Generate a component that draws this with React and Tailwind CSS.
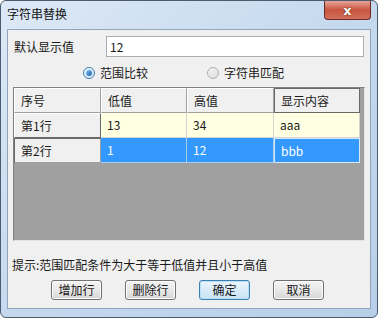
import React from "react";

const font = { fontFamily: '"Noto Sans CJK SC", "Liberation Sans", sans-serif' };

function Radio({ checked, label }) {
  return (
    <div className="flex items-center gap-[5px]">
      <span
        className={
          "w-[12px] h-[12px] rounded-full border flex items-center justify-center " +
          (checked
            ? "border-[#3c7fb1] bg-gradient-to-br from-[#f4f8fc] to-[#d4e3f2]"
            : "border-[#b0b0b0] bg-gradient-to-br from-[#f4f4f4] to-[#dcdcdc]")
        }
      >
        {checked && (
          <span className="w-[6px] h-[6px] rounded-full bg-gradient-to-br from-[#7fc3ff] to-[#1a5fa8]" />
        )}
      </span>
      <span className="text-[12px] leading-none text-[#1a1a1a]">{label}</span>
    </div>
  );
}

function Btn({ children, primary }) {
  return (
    <button
      className={
        "w-[51px] h-[20px] rounded-[3px] border text-[12px] leading-none text-[#1a1a1a] flex items-center justify-center " +
        (primary
          ? "border-[#3c7fb1] bg-gradient-to-b from-[#eaf5fc] to-[#c9e3f5] shadow-[inset_0_0_0_1px_#b9e0f7]"
          : "border-[#707070] bg-gradient-to-b from-[#f3f3f3] via-[#e8e8e8] to-[#d6d6d6] shadow-[inset_0_0_0_1px_#fcfcfc]")
      }
    >
      {children}
    </button>
  );
}

const headCell =
  "h-[25px] flex items-center pl-[6px] bg-[#f0f0f0] border-t border-l border-t-white border-l-white border-r border-b border-r-[#a0a0a0] border-b-[#a0a0a0] text-[12px] text-[#1a1a1a]";

export default function App() {
  const rows = [
    { name: "第1行", lo: "13", hi: "34", txt: "aaa", sel: false },
    { name: "第2行", lo: "1", hi: "12", txt: "bbb", sel: true },
  ];

  return (
    <div className="w-[378px] h-[318px] bg-white" style={font}>
      <div className="w-full h-full rounded-[6px] border border-[#4b5b70] bg-gradient-to-br from-[#dde9f6] via-[#c5d9ee] to-[#b7cfe8] flex flex-col">
        <div className="h-[28px] flex items-start justify-between pl-[6px] pr-[6px]">
          <span className="mt-[7px] text-[12px] leading-none text-[#111]">字符串替换</span>
          <div className="w-[47px] h-[19px] rounded-b-[4px] border border-t-0 border-[#6e2b25] bg-gradient-to-b from-[#e6a496] via-[#c8553f] to-[#d0705c] flex items-center justify-center">
            <span className="text-white font-bold text-[13px] leading-none" style={{ fontFamily: '"DejaVu Sans", sans-serif', textShadow: "0 0 2px #5a1a10" }}>
              x
            </span>
          </div>
        </div>

        <div className="mx-[6px] h-[280px] bg-[#f0f0f0] border border-[#8fa4bd] flex flex-col">
          <div className="mt-[6px] flex items-center h-[21px]">
            <span className="ml-[6px] w-[92px] text-[12px] leading-none text-[#1a1a1a]">默认显示值</span>
            <div className="w-[258px] h-[21px] border border-[#abadb3] bg-white flex items-center pl-[3px] text-[12px] text-[#1a1a1a]">
              12
            </div>
          </div>

          <div className="mt-[9px] h-[14px] flex items-center">
            <div className="ml-[75px]">
              <Radio checked label="范围比较" />
            </div>
            <div className="ml-[59px]">
              <Radio label="字符串匹配" />
            </div>
          </div>

          <div className="ml-[5px] mt-[7px] w-[352px] h-[154px] border border-t-[#808080] border-l-[#808080] border-r-[#e3e3e3] border-b-[#e3e3e3] bg-[#a0a0a0] flex flex-col">
            <div className="flex">
              <div className={headCell + " w-[87px]"}>序号</div>
              <div className={headCell + " w-[86px]"}>低值</div>
              <div className={headCell + " w-[87px]"}>高值</div>
              <div className="w-[86px] h-[25px] flex items-center pl-[6px] bg-[#f0f0f0] border border-[#696969] text-[12px] text-[#1a1a1a]">
                显示内容
              </div>
            </div>
            {rows.map((r) => (
              <div key={r.name} className="flex">
                <div
                  className={
                    "w-[87px] h-[25px] flex items-center pl-[6px] bg-[#f0f0f0] text-[12px] text-[#1a1a1a] border " +
                    (r.sel
                      ? "border-t-[#696969] border-l-[#696969] border-r-[#a0a0a0] border-b-[#a0a0a0]"
                      : "border-t-white border-l-white border-r-[#696969] border-b-[#696969]")
                  }
                >
                  {r.name}
                </div>
                {[r.lo, r.hi, r.txt].map((v, i) => (
                  <div
                    key={i}
                    className={
                      (i === 1 ? "w-[87px] " : "w-[86px] ") +
                      "h-[25px] flex items-center pl-[6px] text-[12px] border-r border-b " +
                      (r.sel
                        ? "bg-[#3399ff] text-white border-[#a9cdee]" +
                          (i === 2 ? " border border-[#d6e9fb]" : "")
                        : "bg-[#ffffe1] text-[#1a1a1a] border-[#d4d4d4]")
                    }
                  >
                    {v}
                  </div>
                ))}
              </div>
            ))}
          </div>

          <div className="mt-[18px] ml-[4px] text-[12px] leading-none text-[#1a1a1a]">
            提示:范围匹配条件为大于等于低值并且小于高值
          </div>

          <div className="mt-[9px] ml-[43px] flex gap-[23px]">
            <Btn>增加行</Btn>
            <Btn>删除行</Btn>
            <Btn primary>确定</Btn>
            <Btn>取消</Btn>
          </div>
        </div>
      </div>
    </div>
  );
}
